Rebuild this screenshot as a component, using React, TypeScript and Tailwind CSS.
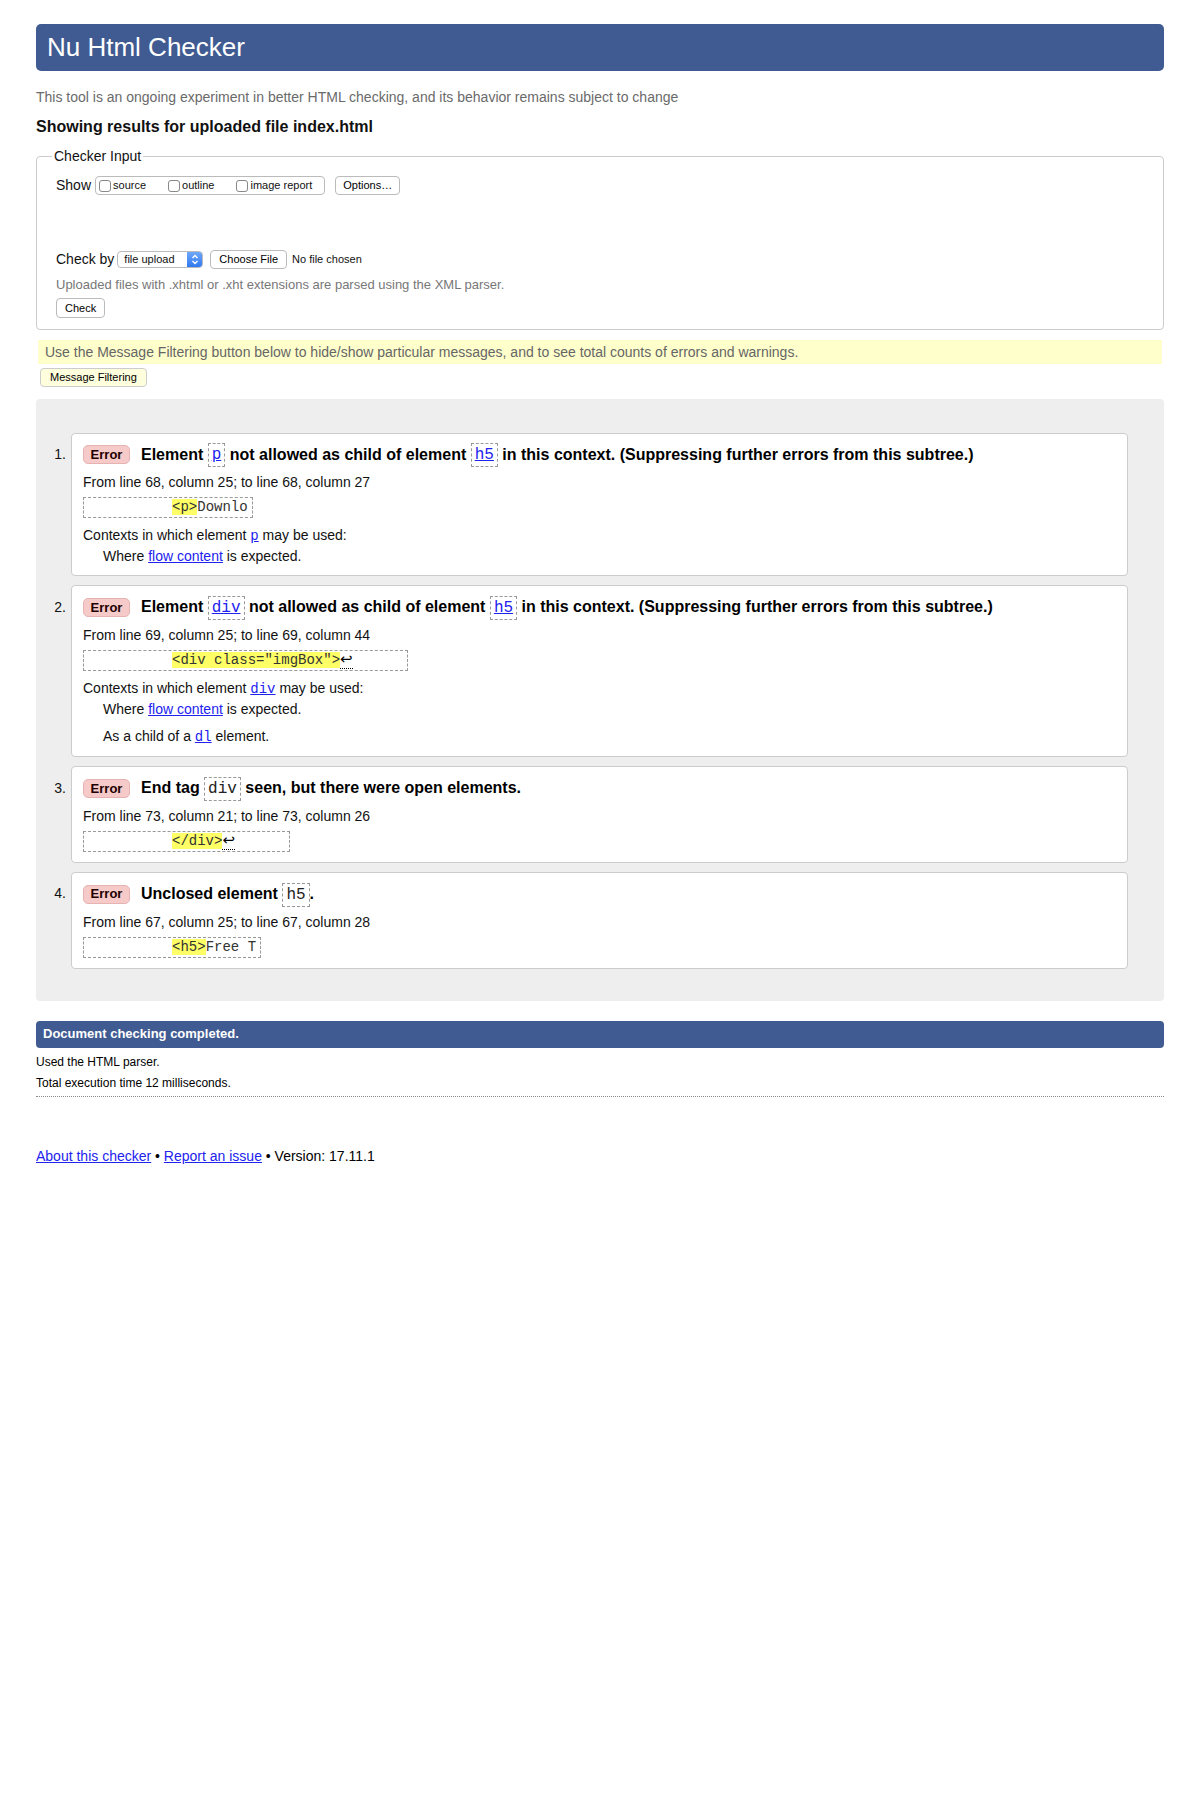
import React from "react";

function Badge() {
  return (
    <span className="inline-flex h-[19px] w-[47px] shrink-0 items-center justify-center rounded-[5px] border border-[#e6b3b3] bg-[#f7caca] text-[13px] font-bold text-[#220000]">
      Error
    </span>
  );
}

/* element name in a dashed box, as used in the message titles */
function Tag({ name, link }: { name: string; link?: boolean }) {
  return (
    <span className="inline-flex h-[24px] items-center border border-dashed border-[#999] px-[3px] align-middle font-['Liberation_Mono',monospace] text-[16px] font-normal">
      {link ? <a className="text-[#2222ee] underline">{name}</a> : <span className="text-[#222]">{name}</span>}
    </span>
  );
}

function SmallCode({ name }: { name: string }) {
  return <a className="font-['Liberation_Mono',monospace] text-[14px] text-[#2222ee] underline">{name}</a>;
}

function Extract({ hl, rest, nl, trail }: { hl: string; rest?: string; nl?: boolean; trail?: string }) {
  return (
    <div className="mt-[6px] w-fit whitespace-pre border border-dashed border-[#999] px-[4px] font-['Liberation_Mono',monospace] text-[14px] leading-[19px] text-[#333]">
      {"          "}
      <span className="bg-[#ffff66]">{hl}</span>
      {rest}
      {nl && <span className="border-b border-dotted border-black font-['DejaVu_Sans',sans-serif] text-[15px] leading-none text-black">↩</span>}
      {trail}
    </div>
  );
}

function Message({ n, title, from, extract, children }: { n: number; title: React.ReactNode; from: string; extract: React.ReactNode; children?: React.ReactNode }) {
  return (
    <li className="flex">
      <div className="mt-[10px] flex h-[24px] w-[35px] shrink-0 items-center justify-end pr-[5px] text-[14px]">{n}.</div>
      <div className="flex-1 rounded-[4px] border border-[#ccc] bg-white px-[11px] pt-[9px] pb-[10px]">
        <div className="flex items-center gap-[11px]">
          <Badge />
          <p className="text-[16px] font-bold leading-[24px] text-black">{title}</p>
        </div>
        <p className="mt-[6px] text-[14px] leading-[18px]">{from}</p>
        {extract}
        {children}
      </div>
    </li>
  );
}

function Btn({ children, className }: { children: React.ReactNode; className?: string }) {
  return (
    <button className={"h-[19px] rounded-[4px] border border-[#bbb] bg-white text-[11px] leading-[17px] text-black " + (className ?? "")}>
      {children}
    </button>
  );
}

function Box({ label, gapAfter }: { label: string; gapAfter?: boolean }) {
  return (
    <label className={"flex items-center gap-[2px] " + (gapAfter ? "mr-[22px]" : "")}>
      <span className="h-[12px] w-[12px] rounded-[3px] border border-[#888] bg-white" />
      <span className="text-[11px]">{label}</span>
    </label>
  );
}

export default function App() {
  return (
    <div className="min-h-[1800px] bg-white px-[36px] pt-[24px] font-['Liberation_Sans',Arial,sans-serif] text-[#111]">
      <h1 className="flex h-[47px] items-center rounded-[5px] bg-[#405b92] pl-[11px] text-[26px] text-white">Nu Html Checker</h1>

      <p className="mt-[17px] text-[14px] leading-[18px] text-[#6a6a6a]">
        This tool is an ongoing experiment in better HTML checking, and its behavior remains subject to change
      </p>
      <h2 className="mt-[10px] text-[16px] font-bold leading-[22px] text-[#111]">Showing results for uploaded file index.html</h2>

      <fieldset className="mt-[10px] rounded-[4px] border border-[#ccc] px-[19px] pb-[10px]">
        <legend className="-ml-[4px] px-[2px] text-[14px] leading-[16px]">Checker Input</legend>

        <div className="mt-[12px] flex h-[19px] items-center text-[14px]">
          <span>Show</span>
          <div className="ml-[4px] flex h-[19px] items-center rounded-[4px] border border-[#bbb] pl-[3px] pr-[12px]">
            <Box label="source" gapAfter />
            <Box label="outline" gapAfter />
            <Box label="image report" />
          </div>
          <Btn className="ml-[10px] px-[7px]">Options…</Btn>
        </div>

        <div className="mt-[56px] flex h-[17px] items-center text-[14px]">
          <span>Check by</span>
          <div className="ml-[3px] flex h-[17px] w-[86px] items-center overflow-hidden rounded-[4px] border border-[#bbb] bg-white">
            <span className="flex-1 pl-[6px] text-[11px]">file upload</span>
            <span className="flex h-full w-[15px] items-center justify-center bg-gradient-to-b from-[#6fa8fa] to-[#2f78f0]">
              <svg width="8" height="11" viewBox="0 0 8 11" fill="none" stroke="white" strokeWidth="1.4">
                <path d="M1.5 4 L4 1.5 L6.5 4" />
                <path d="M1.5 7 L4 9.5 L6.5 7" />
              </svg>
            </span>
          </div>
          <Btn className="ml-[7px] h-[17px] px-[8px] leading-[15px]">Choose File</Btn>
          <span className="ml-[5px] text-[11px]">No file chosen</span>
        </div>

        <p className="mt-[8px] text-[13px] leading-[18px] text-[#777]">Uploaded files with .xhtml or .xht extensions are parsed using the XML parser.</p>
        <Btn className="mt-[4px] h-[20px] px-[8px]">Check</Btn>
      </fieldset>

      <p className="mx-[2px] mt-[10px] h-[24px] bg-[#ffffcc] px-[7px] text-[14px] leading-[24px] text-[#666]">
        Use the Message Filtering button below to hide/show particular messages, and to see total counts of errors and warnings.
      </p>
      <button className="ml-[4px] mt-[4px] h-[19px] rounded-[4px] border border-[#ccc] bg-[#ffffdd] px-[9px] text-[11px] leading-[17px] text-black">
        Message Filtering
      </button>

      <div className="mt-[11px] rounded-[4px] bg-[#eeeeee] pt-[34px] pr-[36px] pb-[32px]">
        <ol className="flex flex-col gap-[9px]">
          <Message
            n={1}
            title={
              <>
                Element <Tag name="p" link /> not allowed as child of element <Tag name="h5" link /> in this context. (Suppressing further errors from this subtree.)
              </>
            }
            from="From line 68, column 25; to line 68, column 27"
            extract={<Extract hl="<p>" rest="Downlo" />}
          >
            <p className="mt-[8px] text-[14px] leading-[18px]">
              Contexts in which element <SmallCode name="p" /> may be used:
            </p>
            <p className="mt-[2px] pl-[20px] text-[14px] leading-[18px]">
              Where <a className="text-[#2222ee] underline">flow content</a> is expected.
            </p>
          </Message>

          <Message
            n={2}
            title={
              <>
                Element <Tag name="div" link /> not allowed as child of element <Tag name="h5" link /> in this context. (Suppressing further errors from this subtree.)
              </>
            }
            from="From line 69, column 25; to line 69, column 44"
            extract={<Extract hl={'<div class="imgBox">'} nl trail="      " />}
          >
            <p className="mt-[8px] text-[14px] leading-[18px]">
              Contexts in which element <SmallCode name="div" /> may be used:
            </p>
            <p className="mt-[2px] pl-[20px] text-[14px] leading-[18px]">
              Where <a className="text-[#2222ee] underline">flow content</a> is expected.
            </p>
            <p className="mt-[9px] pl-[20px] text-[14px] leading-[18px]">
              As a child of a <SmallCode name="dl" /> element.
            </p>
          </Message>

          <Message
            n={3}
            title={
              <>
                End tag <Tag name="div" /> seen, but there were open elements.
              </>
            }
            from="From line 73, column 21; to line 73, column 26"
            extract={<Extract hl="</div>" nl trail="      " />}
          />

          <Message
            n={4}
            title={
              <>
                Unclosed element <Tag name="h5" />.
              </>
            }
            from="From line 67, column 25; to line 67, column 28"
            extract={<Extract hl="<h5>" rest="Free T" />}
          />
        </ol>
      </div>

      <div className="mt-[20px] flex h-[27px] items-center rounded-[4px] bg-[#405b92] pl-[7px] text-[13px] font-bold text-white">
        Document checking completed.
      </div>
      <p className="mt-[6px] text-[12px] leading-[16px] text-black">Used the HTML parser.</p>
      <p className="mt-[5px] text-[12px] leading-[16px] text-black">Total execution time 12 milliseconds.</p>
      <div className="mt-[5px] border-b border-dotted border-[#888]" />

      <p className="mt-[50px] text-[14px] leading-[18px] text-black">
        <a className="text-[#2222ee] underline">About this checker</a> • <a className="text-[#2222ee] underline">Report an issue</a> • Version: 17.11.1
      </p>
    </div>
  );
}
